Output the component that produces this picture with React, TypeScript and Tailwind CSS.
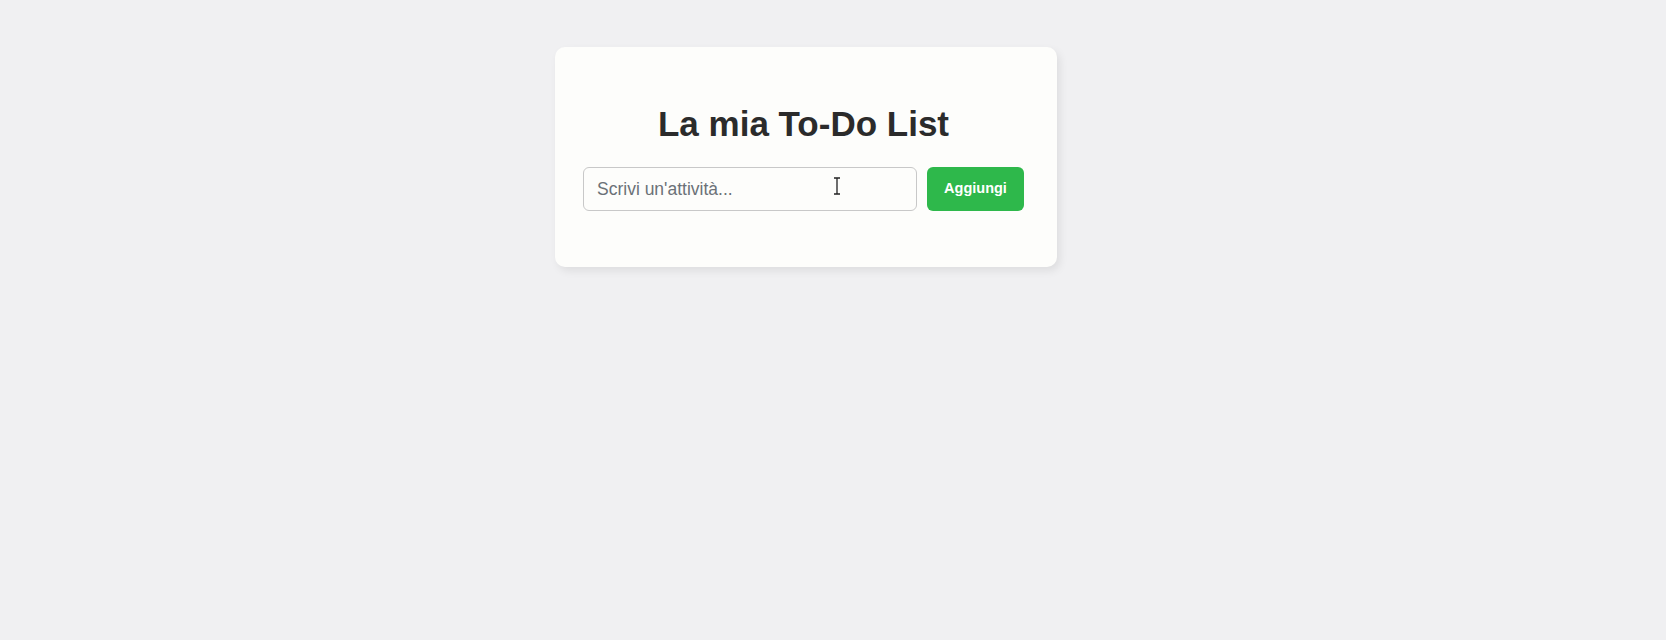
export default function App() {
  return (
    <div
      className="min-h-[640px] w-full bg-[#f0f0f2] flex justify-center items-start pt-[47px] pr-[54px]"
      style={{ fontFamily: '"Liberation Sans", Arial, sans-serif' }}
    >
      <div className="w-[502px] bg-[#fdfdfb] rounded-[10px] shadow-[3px_4px_8px_rgba(0,0,0,0.08)] pt-[57px] pb-[56px] pl-[28px] pr-[33px]">
        <h1 className="text-[35px] leading-[39px] font-bold text-[#2b2b2b] text-center mb-[24px]">
          La mia To-Do List
        </h1>
        <div className="flex gap-[10px]">
          <div className="relative flex-1">
            <input
              type="text"
              placeholder="Scrivi un'attività..."
              className="w-full h-[44px] border border-[#c8c8c8] rounded-[6px] pl-[13px] pr-[12px] text-[17.5px] text-[#333] placeholder:text-[#6b7177] bg-[#fdfdfb] outline-none"
            />
            <svg
              className="absolute left-[250px] top-[10px]"
              width="8"
              height="18"
              viewBox="0 0 8 18"
            >
              <path d="M1 1h6M1 17h6M4 1v16" stroke="#222" strokeWidth="1.3" fill="none" />
            </svg>
          </div>
          <button className="w-[97px] h-[44px] rounded-[6px] bg-[#2eb84b] text-white font-bold text-[14.5px]">
            Aggiungi
          </button>
        </div>
      </div>
    </div>
  );
}
